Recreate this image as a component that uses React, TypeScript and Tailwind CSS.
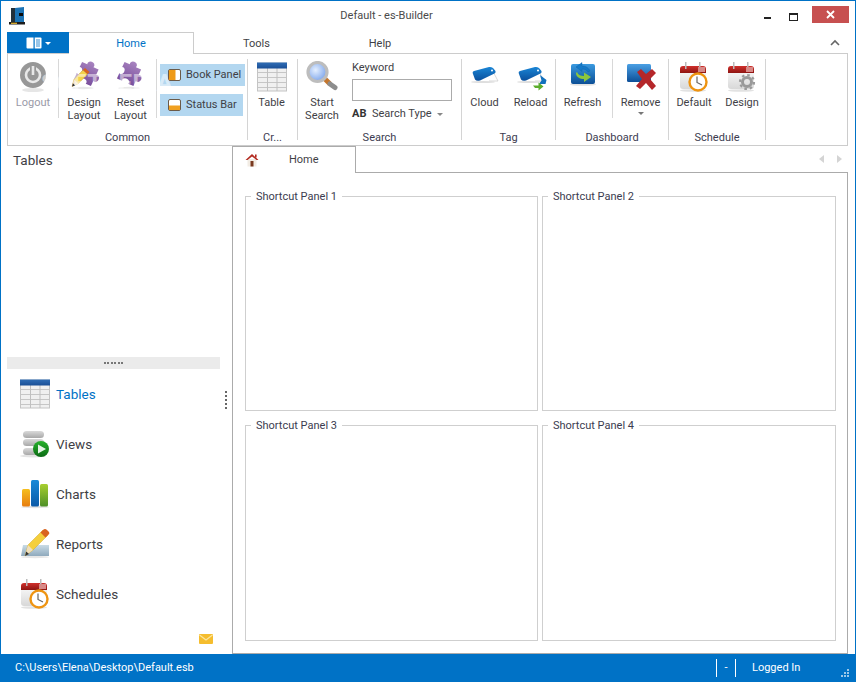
import React from "react";

const Grad = ({ id, a, b, x2 = 0, y2 = 1 }: { id: string; a: string; b: string; x2?: number; y2?: number }) => (
  <linearGradient id={id} x1="0" y1="0" x2={x2} y2={y2}>
    <stop offset="0" stopColor={a} />
    <stop offset="1" stopColor={b} />
  </linearGradient>
);

const Logo = () => (
  <svg width="18" height="18" viewBox="0 0 18 18">
    <rect x="3" y="1" width="5" height="14" fill="#22303a" />
    <path d="M7 1 L16 0 V15 L7 15Z" fill="#1b73b5" />
    <rect x="11" y="6" width="4" height="3" fill="#0a0a0a" />
    <rect x="1" y="15" width="16" height="2.5" fill="#1c1c1c" />
    <rect x="3" y="15.7" width="6" height="1.2" fill="#e8b830" />
  </svg>
);

const Power = () => (
  <svg width="32" height="32" viewBox="0 0 32 32">
    <ellipse cx="16" cy="29" rx="11" ry="2" fill="#e6e6e6" />
    <circle cx="16" cy="14" r="13" fill="#979797" />
    <circle cx="16" cy="14" r="7" fill="none" stroke="#e8e8e8" strokeWidth="2.6" />
    <rect x="13" y="3" width="6" height="8" fill="#979797" />
    <rect x="14.7" y="5" width="2.6" height="9" fill="#e8e8e8" />
  </svg>
);

const Puzzle = ({ id, pencil }: { id: string; pencil?: boolean }) => (
  <svg width="32" height="32" viewBox="0 0 32 32">
    <defs><Grad id={id} a="#a884c0" b="#7a4f9c" /></defs>
    <ellipse cx={pencil ? 15 : 14} cy="27" rx="11" ry="1.2" fill="#e8e8e8" />
    <g transform={`translate(${pencil ? 18.5 : 14} 13) scale(1.14) rotate(25) translate(-16 -16)`}>
      <path d="M8 8 H13 C11.5 3 20.5 3 19 8 H24 V13 C29 11.5 29 20.5 24 19 V24 H19 C20.5 19.5 11.5 19.5 13 24 H8 V19 C12.5 20.5 12.5 11.5 8 13 Z" fill={`url(#${id})`} />
    </g>
    {pencil && (
      <g>
        <path d="M4 25.5 L6 18.5 L15 9 L19.5 13 L10.5 22.5 Z" fill="#f4d24a" stroke="#c9a030" strokeWidth="0.5" />
        <path d="M15 9 L17 7 L21.5 11 L19.5 13Z" fill="#d9641e" />
        <path d="M4 25.5 L6 18.5 L10.5 22.5Z" fill="#f5e6c8" />
        <path d="M4 25.5 L4.9 22.3 L7.2 24.4Z" fill="#333" />
      </g>
    )}
  </svg>
);

const PanelIcon = ({ status }: { status?: boolean }) => (
  <svg width="13" height="12" viewBox="0 0 13 12">
    <rect x="0.5" y="0.5" width="12" height="11" rx="1.5" fill="#fff" stroke="#6b5a48" />
    {status ? (
      <rect x="1" y="6.5" width="11" height="4.5" fill="#f0a020" />
    ) : (
      <rect x="1" y="1" width="6.5" height="10" fill="#ee9a18" />
    )}
  </svg>
);

const TableIcon = ({ id }: { id: string }) => (
  <svg width="30" height="30" viewBox="0 0 30 30">
    <defs><Grad id={id} a="#2f6db5" b="#1a4f96" /></defs>
    <rect x="0.5" y="1" width="29" height="28" fill="#f0f0f0" stroke="#c4c4c4" />
    {[10, 15, 20, 25].map((y) => (
      <rect key={y} x="1" y={y} width="28" height="1" fill="#c6c6c6" />
    ))}
    <rect x="10" y="6" width="1" height="23" fill="#c0c0c0" />
    <rect x="19.5" y="6" width="1" height="23" fill="#c0c0c0" />
    <rect x="0" y="0.5" width="30" height="6" fill={`url(#${id})`} />
  </svg>
);

const Magnifier = () => (
  <svg width="34" height="32" viewBox="0 0 34 32">
    <defs>
      <radialGradient id="glass" cx="0.4" cy="0.4" r="0.7">
        <stop offset="0" stopColor="#e4efff" />
        <stop offset="1" stopColor="#6f9be8" />
      </radialGradient>
    </defs>
    <path d="M19 17 L25 23" stroke="#c4762c" strokeWidth="5" />
    <path d="M25 23 L30 26.5" stroke="#8d8d8d" strokeWidth="5" strokeLinecap="round" />
    <circle cx="12.5" cy="11" r="9.5" fill="url(#glass)" stroke="#bdbdbd" strokeWidth="3.2" />
  </svg>
);

const Tag = ({ id, reload }: { id: string; reload?: boolean }) => (
  <svg width="32" height="32" viewBox="0 0 32 32">
    <defs><Grad id={id} a="#1a86d6" b="#0a4f9c" /></defs>
    <path d="M23 9 Q26 14 29 20 L20 20" fill="none" stroke="#cfcfcf" strokeWidth="0.8" />
    <ellipse cx="14" cy="21" rx="12" ry="1.1" fill="#dedede" />
    <path d="M4 13 Q3 10.5 5 10 L20 6 Q22 5.5 24 7 L26.5 10 Q27 11.5 25.5 12.5 L11 19.5 Q7.5 20.5 6 18.5 Z" fill={`url(#${id})`} />
    <circle cx="23" cy="9.5" r="1" fill="#fff" />
    {reload && (
      <g>
        <path d="M25 14 L31.5 19 L30.5 23 H24 L26.5 19.5Z" fill="#1270bd" />
        <path d="M18 24.5 H23.5 V21.5 L28.5 25.5 L23.5 29.5 V27 H20Z" fill="#5cad2c" />
      </g>
    )}
  </svg>
);

const Refresh = () => (
  <svg width="32" height="32" viewBox="0 0 32 32">
    <defs><Grad id="rf" a="#3a9ae0" b="#0c4f96" /></defs>
    <ellipse cx="16" cy="23.5" rx="13" ry="1.3" fill="#e2e2e2" />
    <rect x="4" y="3" width="24" height="20" rx="2" fill="url(#rf)" />
    <path d="M23 10 C21 6 18 5 15 5 V1.5 L9 6 L15 10.5 V8 C18 8 20 9 21 11 Z" fill="#1479c8" stroke="#0d5fa6" strokeWidth="0.4" />
    <path d="M10 11 C11 14 14 15 17 15 V11.5 L24 16 L17 21 V18 C13 18 9 16 9 12Z" fill="#8cc63e" />
  </svg>
);

const RemoveIcon = () => (
  <svg width="32" height="32" viewBox="0 0 32 32">
    <defs><Grad id="rm" a="#4aa0e4" b="#0d4f98" /></defs>
    <rect x="2" y="3" width="24" height="18" rx="1.5" fill="url(#rm)" />
    <path d="M12 11 L16 8 L21 13 L27 8 L31 12 L25 18 L31 25 L27 29 L21 22 L15 28 L11 25 L17 18Z" fill="#b5272a" />
  </svg>
);

const Calendar = ({ kind, id }: { kind: "clock" | "gear"; id: string }) => (
  <svg width="30" height="32" viewBox="0 0 30 32">
    <defs>
      <Grad id={id} a="#d0302c" b="#8e1512" />
      <Grad id={id + "b"} a="#ffffff" b="#d8d8d8" />
    </defs>
    <ellipse cx="14" cy="29.5" rx="13" ry="1.3" fill="#e2e2e2" />
    <rect x="1" y="5" width="26" height="23" rx="3" fill={`url(#${id}b)`} />
    <path d="M1 12 V8 Q1 5 4 5 H24 Q27 5 27 8 V12Z" fill={`url(#${id})`} />
    <rect x="6" y="1" width="1.5" height="7" fill="#bbb" />
    <rect x="20" y="1" width="1.5" height="7" fill="#bbb" />
    <rect x="19" y="6" width="7" height="5" fill="#d88a88" />
    {kind === "clock" ? (
      <g>
        <circle cx="19" cy="21" r="8.5" fill="#fff" stroke="#ee9412" strokeWidth="2.4" />
        <path d="M18 15.5 V21.5 L23 24" fill="none" stroke="#666" strokeWidth="1.2" />
      </g>
    ) : (
      <g>
        <circle cx="20" cy="21" r="4.5" fill="none" stroke="#9a9a9a" strokeWidth="3" />
        <circle cx="20" cy="21" r="7" fill="none" stroke="#9a9a9a" strokeWidth="2.2" strokeDasharray="2.6 2.9" />
      </g>
    )}
  </svg>
);

const Views = () => (
  <svg width="30" height="30" viewBox="0 0 30 30">
    <defs>
      <Grad id="cyl" a="#dadada" b="#a8a8a8" />
      <Grad id="pl" a="#27b12c" b="#0b6a14" />
    </defs>
    <ellipse cx="13" cy="27" rx="13" ry="1.5" fill="#e4e4e4" />
    <rect x="3" y="2" width="21" height="7" rx="3.5" fill="url(#cyl)" />
    <rect x="3" y="10" width="21" height="7" rx="3.5" fill="url(#cyl)" />
    <rect x="3" y="19" width="21" height="7" rx="3.5" fill="url(#cyl)" />
    <circle cx="21" cy="20" r="8" fill="url(#pl)" />
    <path d="M18 15.5 L26 20 L18 24.5Z" fill="#e6f4e6" />
  </svg>
);

const Charts = () => (
  <svg width="30" height="30" viewBox="0 0 30 30">
    <defs>
      <Grad id="b1" a="#f6bf1e" b="#e77d10" />
      <Grad id="b2" a="#1a8ad8" b="#0b5aa8" />
      <Grad id="b3" a="#a8cf30" b="#4d8f28" />
    </defs>
    <ellipse cx="15" cy="28" rx="14" ry="1.2" fill="#e4e4e4" />
    <rect x="2" y="10" width="8" height="17.5" rx="1.5" fill="url(#b1)" />
    <rect x="11" y="1" width="8" height="26.5" rx="1.5" fill="url(#b2)" />
    <rect x="20" y="5" width="8" height="22.5" rx="1.5" fill="url(#b3)" />
  </svg>
);

const Reports = () => (
  <svg width="30" height="30" viewBox="0 0 30 30">
    <defs><Grad id="rl" a="#c9dbe6" b="#8faabd" /></defs>
    <ellipse cx="15" cy="28" rx="14" ry="1.2" fill="#e6e6e6" />
    <path d="M3 16 H29 V27 H1 Z" fill="url(#rl)" />
    <path d="M5 27 L8 16 L23 1 L28 6 L13 21Z" fill="#f4cf3c" stroke="#d4a828" strokeWidth="0.5" />
    <path d="M23 1 Q25 -1 27 1 L29 3 Q30 5 28 6 L25.5 8.5 L20.5 3.5 Z" fill="#d9641e" />
    <path d="M5 27 L8 16 L13 21Z" fill="#f0dfbc" />
    <path d="M5 27 L6.2 22.5 L9 25Z" fill="#333" />
  </svg>
);

const Mail = () => (
  <svg width="14" height="10" viewBox="0 0 14 10">
    <rect x="0" y="0" width="14" height="10" rx="1" fill="#f5bd2e" />
    <path d="M0.5 1 L7 6 L13.5 1" fill="none" stroke="#fbe6a0" strokeWidth="1.2" />
  </svg>
);

const HomeIcon = () => (
  <svg width="14" height="14" viewBox="0 0 14 14">
    <rect x="2.5" y="6" width="9" height="7.5" fill="#f2ece4" />
    <rect x="5.5" y="8" width="3" height="5.5" fill="#7a3a20" />
    <path d="M0.5 7 L7 1 L13.5 7 L11.5 7 L7 3.5 L2.5 7Z" fill="#b32a20" />
    <rect x="10" y="1.5" width="1.6" height="3" fill="#b32a20" />
  </svg>
);

const RBtn = ({ w, lines, icon, muted, caret }: { w: string; lines: string[]; icon: React.ReactNode; muted?: boolean; caret?: boolean }) => (
  <div className={`${w} flex flex-col items-center pt-[2px]`}>
    <div className="h-8 flex items-center justify-center">{icon}</div>
    <div className={`mt-[3px] text-center leading-[13px] whitespace-nowrap ${muted ? "text-[#9a9aa8]" : "text-[#3f3f46]"}`}>
      {lines.map((l) => (
        <div key={l}>{l}</div>
      ))}
    </div>
    {caret && <div className="mt-[3px] w-0 h-0 border-x-[3px] border-x-transparent border-t-[3px] border-t-[#777]" />}
  </div>
);

const Group = ({ w, label, children }: { w: string; label: string; children: React.ReactNode }) => (
  <div className={`${w} flex flex-col border-r border-[#d4d4d4]`}>
    <div className="flex-1 flex min-h-0">{children}</div>
    <div className="h-[14px] -mb-[5px] leading-[14px] text-center text-[#3c3c50]">{label}</div>
  </div>
);

const Sep = () => <div className="w-px h-[59px] bg-[#d8d8d8] shrink-0" />;

const NavItem = ({ icon, label, active }: { icon: React.ReactNode; label: string; active?: boolean }) => (
  <div className="h-[50px] flex items-center pl-[19px]">
    <div className="w-[30px] flex justify-center">{icon}</div>
    <span className={`ml-[6px] text-[13.5px] leading-[18px] ${active ? "text-[#0072c6]" : "text-[#3f3f46]"}`}>{label}</span>
  </div>
);

const Panel = ({ n }: { n: number }) => (
  <fieldset className="border border-[#cfcfcf] min-w-0 m-0 p-0 h-full">
    <legend className="ml-[5px] px-[5px] pt-[2px] text-[#3c3c50] leading-[14px]">Shortcut Panel {n}</legend>
  </fieldset>
);

export default function App() {
  return (
    <div
      className="relative w-[856px] h-[682px] overflow-hidden flex flex-col bg-white border-t border-x border-[#0072c6] text-[11px] text-[#3f3f46]"
      style={{ fontFamily: 'Roboto, "Noto Sans", sans-serif' }}
    >
      {/* Title bar */}
      <div className="h-[31px] flex items-center shrink-0">
        <div className="ml-[6px] w-[20px] flex justify-center -mt-[1px]">
          <Logo />
        </div>
        <div className="flex-1 text-center pr-[10px] -mt-[1px] text-[#4a4a4a]">Default - es-Builder</div>
        <div className="w-[23px] flex justify-center">
          <div className="w-[7px] h-[2px] bg-[#222] mt-[2px]" />
        </div>
        <div className="w-[23px] ml-[3px] flex justify-center">
          <div className="w-[9px] h-[8px] border border-[#222] border-t-2" />
        </div>
        <div className="ml-[7px] mr-[6px] w-[37px] h-[17px] bg-[#c75050] flex items-center justify-center -mt-[4px]">
          <svg width="9" height="9" viewBox="0 0 9 9">
            <path d="M1 1 L8 8 M8 1 L1 8" stroke="#fff" strokeWidth="1.8" />
          </svg>
        </div>
      </div>

      {/* Tabs */}
      <div className="h-[21px] flex shrink-0 pl-[6px]">
        <div className="w-[62px] h-[22px] bg-[#0072c6] flex items-center justify-center gap-[3px]">
          <svg width="16" height="12" viewBox="0 0 16 12">
            <rect x="0.5" y="0.5" width="15" height="11" rx="1" fill="#fff" />
            <rect x="7.5" y="0" width="1.2" height="12" fill="#0072c6" />
            <path d="M10 3 H14 M10 5 H14 M10 7 H14 M10 9 H14" stroke="#0072c6" strokeWidth="0.8" />
          </svg>
          <div className="w-0 h-0 border-x-[3px] border-x-transparent border-t-[3px] border-t-white" />
        </div>
        <div className="relative z-10 w-[125px] h-[22px] pt-[1px] bg-white border-t border-r border-[#cccccc] flex items-center justify-center text-[#0072c6]">
          Home
        </div>
        <div className="w-[125px] flex items-center justify-center pt-[3px]">Tools</div>
        <div className="w-[122px] flex items-center justify-center pt-[3px]">Help</div>
        <div className="flex-1 flex justify-end items-center pr-[15px]">
          <svg width="10" height="7" viewBox="0 0 10 7">
            <path d="M1 6 L5 2 L9 6" fill="none" stroke="#666" strokeWidth="1.6" />
          </svg>
        </div>
      </div>

      {/* Ribbon */}
      <div className="ml-[6px] w-[841px] h-[93px] shrink-0 border border-[#cccccc] flex pt-[5px] pb-[5px]">
        <Group w="w-[240px]" label="Common">
          <RBtn w="w-[50px]" lines={["Logout"]} icon={<Power />} muted />
          <Sep />
          <RBtn w="w-[50px]" lines={["Design", "Layout"]} icon={<Puzzle id="pz1" pencil />} />
          <RBtn w="w-[43px] mr-[4px]" lines={["Reset", "Layout"]} icon={<Puzzle id="pz2" />} />
          <Sep />
          <div className="flex flex-col items-start pl-[3px] pt-[5px] gap-[8px]">
            <div className="w-[85px] h-[22px] bg-[#b3d7f0] flex items-center pl-[8px] gap-[5px] text-[#3f3f46] whitespace-nowrap">
              <PanelIcon />
              <span className="pt-[1px]">Book Panel</span>
            </div>
            <div className="w-[83px] h-[22px] bg-[#b3d7f0] flex items-center pl-[8px] gap-[5px] text-[#3f3f46] whitespace-nowrap">
              <PanelIcon status />
              <span className="pt-[1px]">Status Bar</span>
            </div>
          </div>
        </Group>
        <Group w="w-[50px]" label="Cr...">
          <RBtn w="w-[47px]" lines={["Table"]} icon={<TableIcon id="tb1" />} />
        </Group>
        <Group w="w-[164px]" label="Search">
          <RBtn w="w-[48px]" lines={["Start", "Search"]} icon={<Magnifier />} />
          <div className="ml-[6px] flex flex-col">
            <div className="leading-[14px] mt-[2px]">Keyword</div>
            <div className="mt-[4px] w-[100px] h-[22px] border border-[#ababab] bg-white" />
            <div className="mt-[5px] flex items-center h-[16px]">
              <span className="font-bold text-[11px] text-[#333] w-[20px]">AB</span>
              <span>Search Type</span>
              <div className="ml-[5px] w-0 h-0 border-x-[3px] border-x-transparent border-t-[3px] border-t-[#888]" />
            </div>
          </div>
        </Group>
        <Group w="w-[94px]" label="Tag">
          <RBtn w="w-[45px]" lines={["Cloud"]} icon={<Tag id="tg1" />} />
          <RBtn w="w-[47px]" lines={["Reload"]} icon={<Tag id="tg2" reload />} />
        </Group>
        <Group w="w-[113px]" label="Dashboard">
          <RBtn w="w-[53px] mr-[3px]" lines={["Refresh"]} icon={<Refresh />} />
          <Sep />
          <RBtn w="w-[55px]" lines={["Remove"]} icon={<RemoveIcon />} caret />
        </Group>
        <Group w="w-[97px]" label="Schedule">
          <RBtn w="w-[50px]" lines={["Default"]} icon={<Calendar kind="clock" id="cl1" />} />
          <RBtn w="w-[46px]" lines={["Design"]} icon={<Calendar kind="gear" id="cl2" />} />
        </Group>
      </div>

      {/* Main */}
      <div className="flex-1 flex min-h-0">
        <div className="relative w-[232px] shrink-0 border-r border-[#ababab] flex flex-col">
          <div className="h-[211px] pl-[12px] pt-[4px] text-[13.5px] leading-[20px] shrink-0">Tables</div>
          <div className="ml-[6px] w-[213px] h-[12px] bg-[#ebebeb] flex items-center justify-center gap-[1.5px] shrink-0">
            {[0, 1, 2, 3, 4, 5].map((i) => (
              <div key={i} className="w-[2px] h-[2px] bg-[#777]" />
            ))}
          </div>
          <NavItem icon={<TableIcon id="tb2" />} label="Tables" active />
          <NavItem icon={<Views />} label="Views" />
          <NavItem icon={<Charts />} label="Charts" />
          <NavItem icon={<Reports />} label="Reports" />
          <NavItem icon={<Calendar kind="clock" id="cl3" />} label="Schedules" />
          <div className="self-end mr-[19px] mt-[15px]">
            <Mail />
          </div>
          <div className="absolute left-[224px] top-[245px] flex flex-col gap-[2px]">
            {[0, 1, 2, 3, 4].map((i) => (
              <div key={i} className="w-[2px] h-[2px] bg-[#666]" />
            ))}
          </div>
        </div>

        <div className="flex-1 mr-[7px] flex flex-col min-w-0">
          <div className="h-[26px] flex shrink-0">
            <div className="relative z-10 w-[123px] h-[27px] -mb-px bg-white border-t border-r border-[#ababab] flex items-center pl-[12px]">
              <HomeIcon />
              <span className="ml-[30px]">Home</span>
            </div>
            <div className="flex-1 flex items-center justify-end gap-[13px] pr-[6px]">
              <div className="w-0 h-0 border-y-[4px] border-y-transparent border-r-[5px] border-r-[#d4d4d4]" />
              <div className="w-0 h-0 border-y-[4px] border-y-transparent border-l-[5px] border-l-[#d4d4d4]" />
            </div>
          </div>
          <div className="flex-1 min-h-0 border-t border-r border-b border-[#ababab] pl-[12px] pt-[15px] grid grid-cols-[293px_294px] grid-rows-[223px_224px] gap-x-[4px] gap-y-[6px]">
            <Panel n={1} />
            <Panel n={2} />
            <Panel n={3} />
            <Panel n={4} />
          </div>
        </div>
      </div>

      {/* Status */}
      <div className="h-[28px] shrink-0 bg-[#0072c6] text-white flex items-center pl-[14px]">
        <span>C:\Users\Elena\Desktop\Default.esb</span>
        <div className="ml-auto w-px h-[18px] bg-white" />
        <span className="w-[18px] text-center">-</span>
        <div className="w-px h-[18px] bg-white" />
        <span className="ml-[16px] w-[49px] whitespace-nowrap">Logged In</span>
        <div className="ml-[40px] mr-[6px] mt-[10px] grid grid-cols-3 gap-[1px]">
          {[0, 0, 1, 0, 1, 1, 1, 1, 1].map((v, i) => (
            <div key={i} className={`w-[2px] h-[2px] ${v ? "bg-[#9cc8e8]" : ""}`} />
          ))}
        </div>
      </div>

      <div className="absolute left-[40px] top-[73px] pointer-events-none text-[24px] leading-[18px] font-bold tracking-[0.5px] text-white/50">
        SOFTPEDIA
      </div>
    </div>
  );
}
